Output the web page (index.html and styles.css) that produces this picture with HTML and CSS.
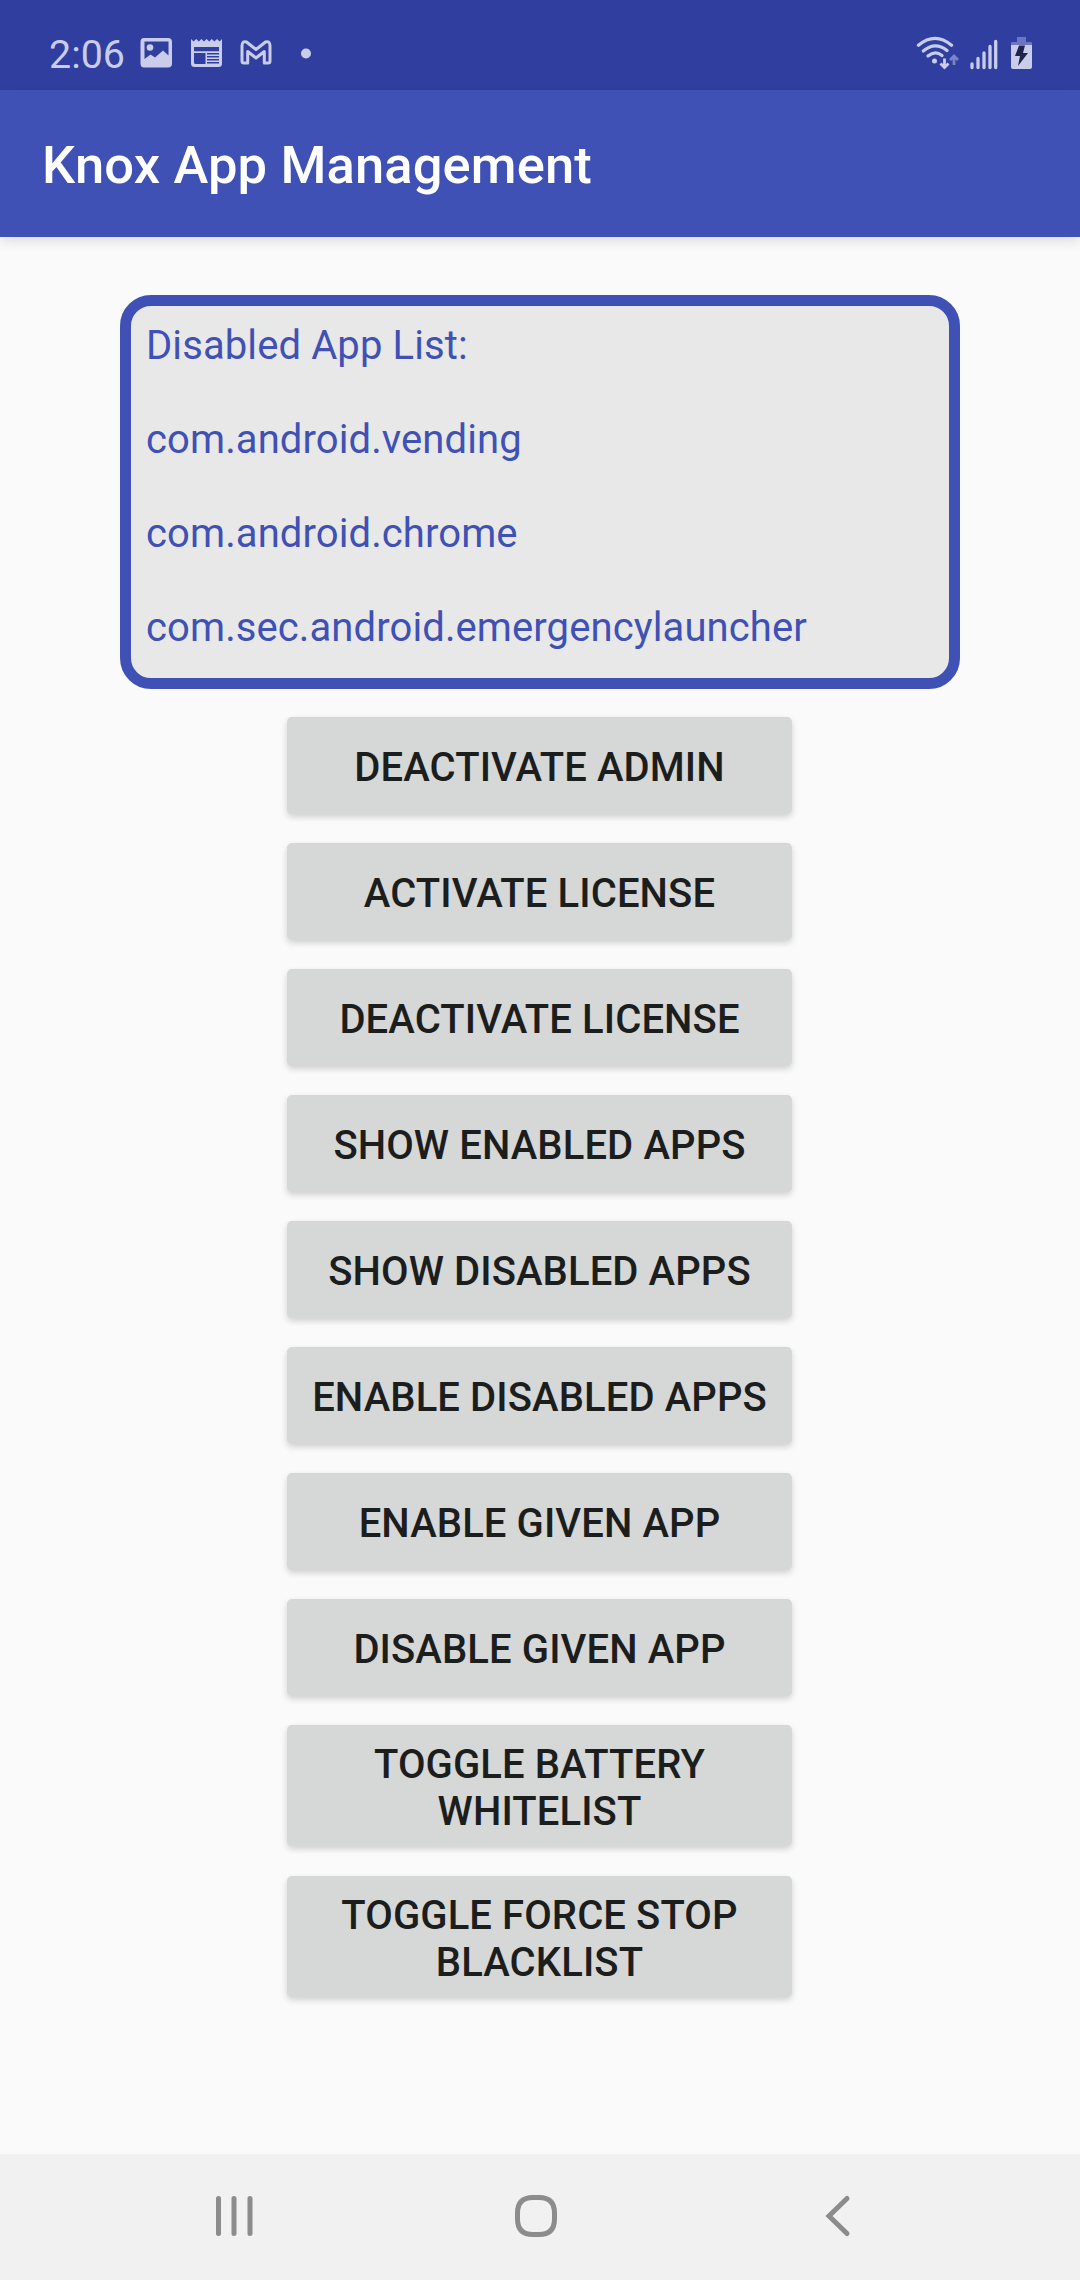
FILE: index.html
```html
<!DOCTYPE html>
<html lang="en">
<head>
<meta charset="utf-8">
<title>Knox App Management</title>
<link rel="stylesheet" href="styles.css">
</head>
<body>
<div class="screen">
  <header class="status-bar">
    <span class="clock">2:06</span>
    <svg class="notifications" width="180" height="36" viewBox="0 0 180 36">
      <path fill-rule="evenodd" d="M4 2H28Q32 2 32 6V27.500Q32 31.500 28 31.500H4Q0.500 31.500 0.500 27.500V6Q0.500 2 4 2ZM4.500 5.500V23L10.500 18.500L15 21.500L23 14.500L28.500 19.500V5.500Z"/>
      <circle cx="10" cy="11.500" r="3.300"/>
      <path fill-rule="evenodd" d="M51 3L53.600 5.500L56.200 3L58.800 5.500L61.400 3L64 5.500L66.600 3L69.200 5.500L71.800 3L74.400 5.500L77 3L79.600 5.500L82 3V27.500Q82 31 78.500 31H54.500Q51 31 51 27.500ZM54 11H79V15.200H54ZM54 17H65.500V28H55.500Q54 28 54 26.500ZM67 17H79V18.400H67ZM67 20H79V21.400H67ZM67 23H79V24.400H67ZM67 26H79V27.400H67Z"/>
      <path class="outline" d="M102 10Q102 4.500 106.500 6L116 13.500L125.500 6Q130 4.500 130 10V25Q130 27 128 27H124.300V15.500L116 22L107.700 15.500V27H104Q102 27 102 25Z"/>
      <circle cx="166" cy="17.500" r="5"/>
    </svg>
    <svg class="signals" width="120" height="36" viewBox="0 0 120 36">
      <g class="waves">
        <path d="M2.500 9.300Q19 -4.500 35.500 9.300"/>
        <path d="M7.300 15Q19 5 31 14.500"/>
        <path d="M12 20Q19 14 26 19.500"/>
      </g>
      <circle cx="18.500" cy="25" r="2.500"/>
      <path class="arrow" d="M28.500 22.500V31M24.500 27.500L28.500 31.500L32.500 27.500"/>
      <path class="arrow dim" d="M38 29V20M34 24L38 20L42 24"/>
      <path class="bars" d="M56 28V31.500M62 22.500V31.500M68 17V31.500M74 10.500V31.500M79.700 5.500V31.500"/>
      <path class="cap" d="M101 1H110V6H115Q116 6 116 7V9H95V7Q95 6 96 6H101Z"/>
      <path d="M95 9H116V31Q116 33 114 33H97Q95 33 95 31Z"/>
      <path class="bolt" d="M103 9.500H109L107 17H112L102 30L104 20H99Z"/>
    </svg>
  </header>
  <div class="app-bar"><h1 class="title">Knox App Management</h1></div>
  <main class="content">
    <div class="app-list">
      <p>Disabled App List:</p>
      <p>com.android.vending</p>
      <p>com.android.chrome</p>
      <p>com.sec.android.emergencylauncher</p>
    </div>
    <div class="actions">
      <button class="action">Deactivate Admin</button>
      <button class="action">Activate License</button>
      <button class="action">Deactivate License</button>
      <button class="action">Show Enabled Apps</button>
      <button class="action">Show Disabled Apps</button>
      <button class="action">Enable Disabled Apps</button>
      <button class="action">Enable Given App</button>
      <button class="action">Disable Given App</button>
      <button class="action tall">Toggle Battery<br>Whitelist</button>
      <button class="action tall">Toggle Force Stop<br>Blacklist</button>
    </div>
  </main>
  <nav class="nav-bar">
    <svg width="48" height="48" viewBox="0 0 48 48"><path d="M8.500 6.500V41.500M24 6.500V41.500M40 6.500V41.500"/></svg>
    <svg width="48" height="48" viewBox="0 0 48 48"><path d="M24 5.500H27Q42.500 5.500 42.500 21V27Q42.500 42.500 27 42.500H21Q5.500 42.500 5.500 27V21Q5.500 5.500 21 5.500Z"/></svg>
    <svg width="48" height="48" viewBox="0 0 48 48"><path d="M33 6.500L15 24L33 41.500"/></svg>
  </nav>
</div>
</body>
</html>
```
FILE: styles.css
```css
* { box-sizing: border-box; }
body {
  margin: 0;
  background: #fafafa;
  font-family: Roboto, "Liberation Sans", sans-serif;
}
.screen {
  width: 1080px;
  height: 2280px;
  display: flex;
  flex-direction: column;
}
.status-bar {
  height: 90px;
  flex: none;
  display: flex;
  align-items: center;
  padding: 17px 44px 0 49px;
  background: #303f9f;
  color: #c9cdea;
}
.status-bar svg { fill: #c9cdea; }
.clock {
  width: 91px;
  padding-top: 2px;
  font-size: 39.4px;
  line-height: 46px;
}
.notifications .outline {
  fill: none;
  stroke: #c9cdea;
  stroke-width: 3;
  stroke-linejoin: round;
}
.signals { margin-left: auto; }
.signals .waves, .signals .arrow, .signals .bars {
  fill: none;
  stroke: #c9cdea;
  stroke-width: 3.3;
  stroke-linecap: round;
}
.signals .arrow { stroke-width: 2.8; stroke-linecap: butt; }
.signals .dim { stroke: #7a84c6; }
.status-bar .cap { fill: #6c76bf; }
.status-bar .bolt { fill: #20254d; }
.app-bar {
  height: 147px;
  flex: none;
  display: flex;
  align-items: center;
  padding: 2px 42px 0;
  background: #3f51b5;
  box-shadow: 0 4px 12px rgba(0, 0, 0, .12);
}
.title {
  margin: 0;
  font-size: 52.5px;
  font-weight: 500;
  letter-spacing: .14px;
  color: #fff;
}
.content {
  flex: 1;
  display: flex;
  flex-direction: column;
  align-items: center;
  padding-top: 58px;
}
.app-list {
  width: 840px;
  height: 394px;
  padding: 16px 15px;
  border: 11px solid #3f51b5;
  border-radius: 31px;
  background: #e8e8e8;
  color: #3f51b5;
  font-size: 40px;
  letter-spacing: .1px;
  line-height: 47px;
  display: flex;
  flex-direction: column;
  gap: 47px;
}
.app-list p { margin: 0; }
.actions {
  width: 505px;
  margin: 28px 1px 0 0;
  display: flex;
  flex-direction: column;
  gap: 29px;
}
.action {
  height: 97px;
  padding: 3px 0 0;
  border: 0;
  border-radius: 5px;
  background: #d6d8d7;
  box-shadow: 0 3px 6px rgba(0, 0, 0, .17);
  color: #1c1d1d;
  font: 500 40px/47px Roboto, "Liberation Sans", sans-serif;
  letter-spacing: .1px;
  text-transform: uppercase;
}
.action.tall { height: 121px; padding-top: 4px; }
.action.tall + .tall { margin-top: 1px; }
.nav-bar {
  height: 126px;
  flex: none;
  display: flex;
  justify-content: space-between;
  align-items: center;
  padding: 0 218px 2px 210px;
  background: #f1f1f1;
}
.nav-bar path {
  fill: none;
  stroke: #8c8c8c;
  stroke-width: 5;
  stroke-linecap: round;
}
```
